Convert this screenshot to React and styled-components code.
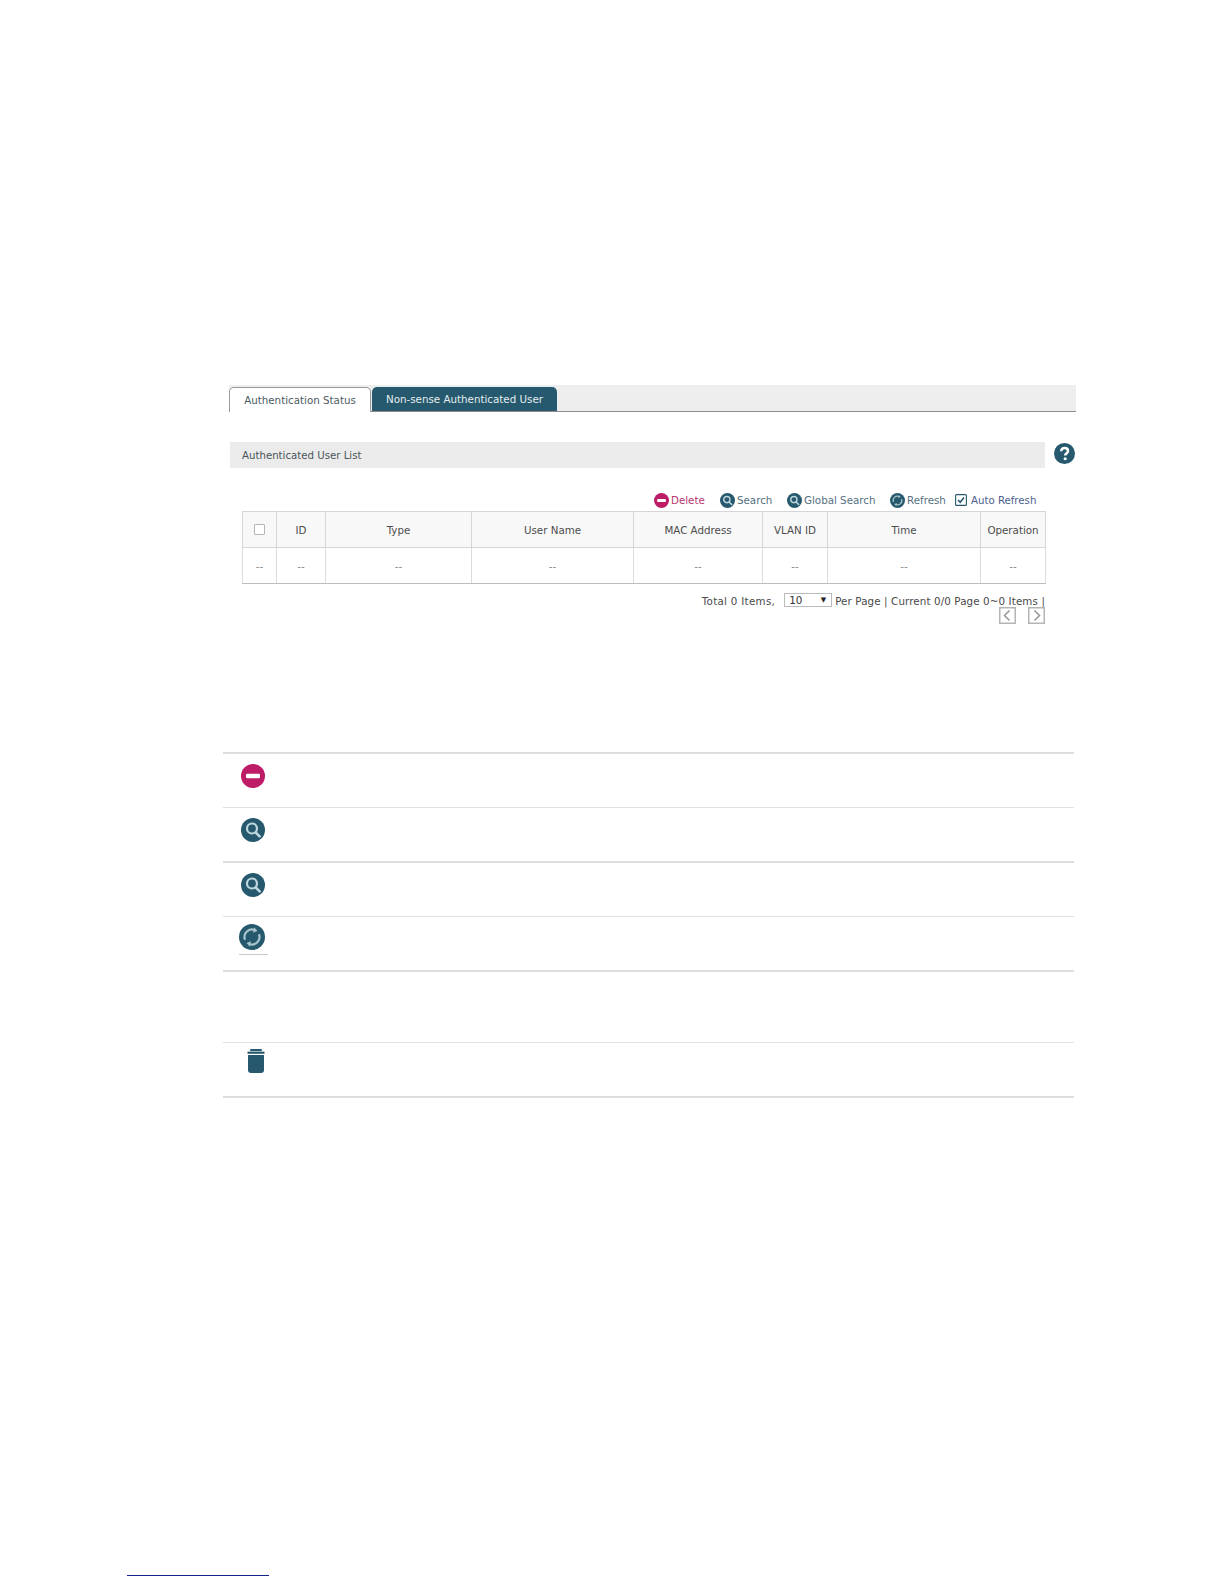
import React from 'react';
import styled, { createGlobalStyle } from 'styled-components';

const Global = createGlobalStyle`
  html, body { margin: 0; padding: 0; background: #fff; }
  body { font-family: "DejaVu Sans", Verdana, sans-serif; color: #444; }
`;

const Page = styled.div`
  width: 1224px;
  height: 1584px;
  box-sizing: border-box;
  padding-top: 385px;
  display: flex;
  flex-direction: column;
  overflow: hidden;
`;

const Shot = styled.section`
  width: 847px;
  margin-left: 229px;
  font-size: 10.3px;
`;

const TabStrip = styled.div`
  height: 26px;
  box-sizing: content-box;
  background: #eeeeee;
  border-bottom: 1px solid #8c8c8c;
  display: flex;
  align-items: flex-end;
  gap: 1px;
`;

const Tab = styled.div`
  height: ${p => (p.$active ? '25px' : '24px')};
  width: ${p => p.$w}px;
  box-sizing: border-box;
  display: flex;
  align-items: center;
  justify-content: center;
  border-radius: 5px 5px 0 0;
  margin-bottom: ${p => (p.$active ? '-1px' : '0')};
  background: ${p => (p.$active ? '#fff' : '#26596d')};
  color: ${p => (p.$active ? '#4d5b63' : '#e4edf0')};
  border: ${p => (p.$active ? '1px solid #9a9a9a' : 'none')};
  border-bottom: none;
`;

const SectionRow = styled.div`
  margin-top: 30px;
  display: flex;
  align-items: center;
`;

const SectionTitle = styled.div`
  margin-left: 1px;
  width: 815px;
  height: 26px;
  background: #ebebeb;
  display: flex;
  align-items: center;
  padding-left: 12px;
  box-sizing: border-box;
  color: #4a555a;
  font-size: 10.2px;
`;

const HelpIcon = styled.svg`
  width: 21px;
  height: 21px;
  margin: -3px 0 0 9px;
`;

const Toolbar = styled.div`
  margin: 23px 0 2px;
  width: 817px;
  height: 18px;
  display: flex;
  align-items: center;
  justify-content: flex-start;
  padding-left: 425px;
  box-sizing: border-box;
`;

const ToolItem = styled.div`
  display: flex;
  align-items: center;
  width: ${p => p.$w}px;
  flex: none;
  gap: 2px;
  color: ${p => p.$c || '#55707f'};
  white-space: nowrap;
`;

const AutoItem = styled(ToolItem)`
  color: #4a5f8c;
  gap: 4px;
  font-size: 10.2px;
`;

const SmallIcon = styled.svg`
  width: 15px;
  height: 15px;
  flex: none;
`;

const CheckIcon = styled.svg`
  width: 12px;
  height: 12px;
  flex: none;
`;

const TableWrap = styled.div`
  margin-left: 13px;
  width: 803px;
`;

const Table = styled.table`
  width: 803px;
  table-layout: fixed;
  border-collapse: collapse;
  border: 1px solid #cfcfcf;
  border-bottom-color: #bdbdbd;
`;

const HeadCell = styled.th`
  height: 35px;
  padding: 0;
  font-weight: 400;
  background: #f8f8f8;
  color: #4c4c4c;
  border: 1px solid #d6d6d6;
  text-align: center;
`;

const BodyCell = styled.td`
  height: 35px;
  padding: 0;
  text-align: center;
  color: #8a8a8a;
  border: 1px solid #dcdcdc;
  border-bottom-color: #bdbdbd;
`;

const HeadCheck = styled.span`
  display: inline-block;
  width: 9px;
  height: 9px;
  border: 1px solid #b5b5b5;
  border-radius: 1px;
  background: #fff;
  vertical-align: middle;
  position: relative;
  top: -1px;
`;

const Pager = styled.div`
  margin-top: 9px;
  height: 16px;
  display: flex;
  align-items: center;
  justify-content: flex-end;
  color: #4a4a4a;
  white-space: nowrap;
  letter-spacing: 0.12px;
`;

const PagerTotal = styled.span`
  letter-spacing: 0.3px;
`;

const FakeSelect = styled.div`
  width: 48px;
  height: 14px;
  margin: -2px 3px 0 9px;
  box-sizing: border-box;
  border: 1px solid #bbb;
  display: flex;
  align-items: center;
  justify-content: space-between;
  padding: 0 5px 0 4px;
  color: #333;
`;

const Arrow = styled.span`
  font-size: 7px;
  color: #222;
`;

const PagerNav = styled.div`
  margin-top: -2px;
  display: flex;
  justify-content: flex-end;
  gap: 12px;
`;

const NavIcon = styled.svg`
  width: 17px;
  height: 17px;
`;

const GuideTable = styled.div`
  width: 851px;
  margin-left: 223px;
  margin-top: ${p => p.$top}px;
  border-bottom: 2px solid #dedede;
`;

const GuideRow = styled.div`
  height: ${p => p.$h}px;
  border-top: ${p => (p.$thin ? '1px solid #e2e2e2' : '2px solid #dedede')};
`;

const IconCell = styled.div`
  width: 60px;
  display: flex;
  flex-direction: column;
  align-items: center;
  padding-top: ${p => p.$pt}px;
`;

const BigIcon = styled.svg`
  width: ${p => p.$s}px;
  height: ${p => p.$s}px;
  display: block;
  margin-left: ${p => p.$shift || 0}px;
`;

const TrashIcon = styled.svg`
  width: 18px;
  height: 24px;
  display: block;
  margin-left: 5px;
`;

const Underline = styled.div`
  width: 29px;
  height: 1px;
  background: #c9c9c9;
  margin-top: 4px;
`;

const FootNote = styled.div`
  width: 142px;
  height: 1px;
  margin-left: 127px;
  margin-top: ${p => p.$top}px;
  background: #14238c;
`;

const teal = '#26596d';

const Minus = () => (
  <>
    <circle cx="12" cy="12" r="12" fill="#bd1c66" />
    <rect x="5" y="9.7" width="14" height="4.6" rx="1.2" fill="#fff" />
  </>
);
const Magnifier = () => (
  <>
    <circle cx="12" cy="12" r="12" fill={teal} />
    <circle cx="11" cy="10.5" r="5" fill="none" stroke="#bfd8de" strokeWidth="2.2" />
    <path d="M14.6 14.4 L18.6 18.4" stroke="#bfd8de" strokeWidth="2.6" strokeLinecap="round" />
  </>
);
const Refresh = () => (
  <>
    <circle cx="12" cy="12" r="12" fill={teal} />
    <path d="M5.6 14.5 A6.8 6.8 0 0 1 14.5 5.6" fill="none" stroke="#a9c5cd" strokeWidth="2" />
    <path d="M18.4 9.5 A6.8 6.8 0 0 1 9.5 18.4" fill="none" stroke="#a9c5cd" strokeWidth="2" />
    <path d="M14 3 L17 6.5 L13 8 Z" fill="#a9c5cd" />
    <path d="M10 21 L7 17.5 L11 16 Z" fill="#a9c5cd" />
  </>
);

const columns = [
  { w: 34, head: <HeadCheck /> },
  { w: 49, head: 'ID' },
  { w: 146, head: 'Type' },
  { w: 162, head: 'User Name' },
  { w: 129, head: 'MAC Address' },
  { w: 65, head: 'VLAN ID' },
  { w: 153, head: 'Time' },
  { w: 65, head: 'Operation' },
];

export default function App() {
  return (
    <Page>
      <Global />
      <Shot>
        <TabStrip>
          <Tab $active $w={142}>Authentication Status</Tab>
          <Tab $w={185}>Non-sense Authenticated User</Tab>
        </TabStrip>
        <SectionRow>
          <SectionTitle>Authenticated User List</SectionTitle>
          <HelpIcon viewBox="0 0 24 24">
            <circle cx="12" cy="12" r="12" fill={teal} />
            <path d="M8.2 9.4 C8.2 7 10 5.6 12.2 5.6 C14.5 5.6 16 7 16 9 C16 11.6 12.8 11.8 12.8 14.4" fill="none" stroke="#fff" strokeWidth="2.8" />
            <circle cx="12.8" cy="18" r="1.8" fill="#fff" />
          </HelpIcon>
        </SectionRow>
        <Toolbar>
          <ToolItem $w={66} $c="#b8386e">
            <SmallIcon viewBox="0 0 24 24"><Minus /></SmallIcon>Delete
          </ToolItem>
          <ToolItem $w={67}>
            <SmallIcon viewBox="0 0 24 24"><Magnifier /></SmallIcon>Search
          </ToolItem>
          <ToolItem $w={103}>
            <SmallIcon viewBox="0 0 24 24"><Magnifier /></SmallIcon>Global Search
          </ToolItem>
          <ToolItem $w={65}>
            <SmallIcon viewBox="0 0 24 24"><Refresh /></SmallIcon>Refresh
          </ToolItem>
          <AutoItem $w={85}>
            <CheckIcon viewBox="0 0 12 12">
              <rect x="0.6" y="0.6" width="10.8" height="10.8" rx="1" fill="#fff" stroke={teal} strokeWidth="1.1" />
              <path d="M3 6 L5.2 8.2 L9 3.6" fill="none" stroke={teal} strokeWidth="1.6" />
            </CheckIcon>
            Auto Refresh
          </AutoItem>
        </Toolbar>
        <TableWrap>
          <Table>
            <colgroup>
              {columns.map((c, i) => <col key={i} style={{ width: c.w }} />)}
            </colgroup>
            <thead>
              <tr>{columns.map((c, i) => <HeadCell key={i}>{c.head}</HeadCell>)}</tr>
            </thead>
            <tbody>
              <tr>{columns.map((c, i) => <BodyCell key={i}>--</BodyCell>)}</tr>
            </tbody>
          </Table>
          <Pager>
            <PagerTotal>Total 0 Items,</PagerTotal>
            <FakeSelect>10<Arrow>▼</Arrow></FakeSelect>
            Per Page | Current 0/0 Page 0~0 Items |
          </Pager>
          <PagerNav>
            <NavIcon viewBox="0 0 17 17">
              <rect x="0.75" y="0.75" width="15.5" height="15.5" fill="#fff" stroke="#b5b5b5" strokeWidth="1.5" />
              <path d="M10.5 3.5 L5.5 8.5 L10.5 13.5" fill="none" stroke="#9a9a9a" strokeWidth="1.6" />
            </NavIcon>
            <NavIcon viewBox="0 0 17 17">
              <rect x="0.75" y="0.75" width="15.5" height="15.5" fill="#fff" stroke="#b5b5b5" strokeWidth="1.5" />
              <path d="M6.5 3.5 L11.5 8.5 L6.5 13.5" fill="none" stroke="#9a9a9a" strokeWidth="1.6" />
            </NavIcon>
          </PagerNav>
        </TableWrap>
      </Shot>

      <GuideTable $top={128}>
        <GuideRow $h={53}>
          <IconCell $pt={10}><BigIcon $s={24} viewBox="0 0 24 24"><Minus /></BigIcon></IconCell>
        </GuideRow>
        <GuideRow $thin $h={53}>
          <IconCell $pt={10}><BigIcon $s={24} viewBox="0 0 24 24"><Magnifier /></BigIcon></IconCell>
        </GuideRow>
        <GuideRow $h={53}>
          <IconCell $pt={10}><BigIcon $s={24} viewBox="0 0 24 24"><Magnifier /></BigIcon></IconCell>
        </GuideRow>
        <GuideRow $thin $h={53}>
          <IconCell $pt={7}>
            <BigIcon $s={26} $shift={-2} viewBox="0 0 24 24"><Refresh /></BigIcon>
            <Underline />
          </IconCell>
        </GuideRow>
      </GuideTable>

      <GuideTable $top={70}>
        <GuideRow $thin $h={53}>
          <IconCell $pt={6}>
            <TrashIcon viewBox="0 0 18 24">
              <rect x="3" y="0" width="12" height="2" rx="1" fill={teal} />
              <rect x="0.5" y="2.6" width="17" height="2.2" fill={teal} />
              <path d="M1 6 H17 V21 Q17 24 14 24 H4 Q1 24 1 21 Z" fill={teal} />
            </TrashIcon>
          </IconCell>
        </GuideRow>
      </GuideTable>

      <FootNote $top={477} />
    </Page>
  );
}
